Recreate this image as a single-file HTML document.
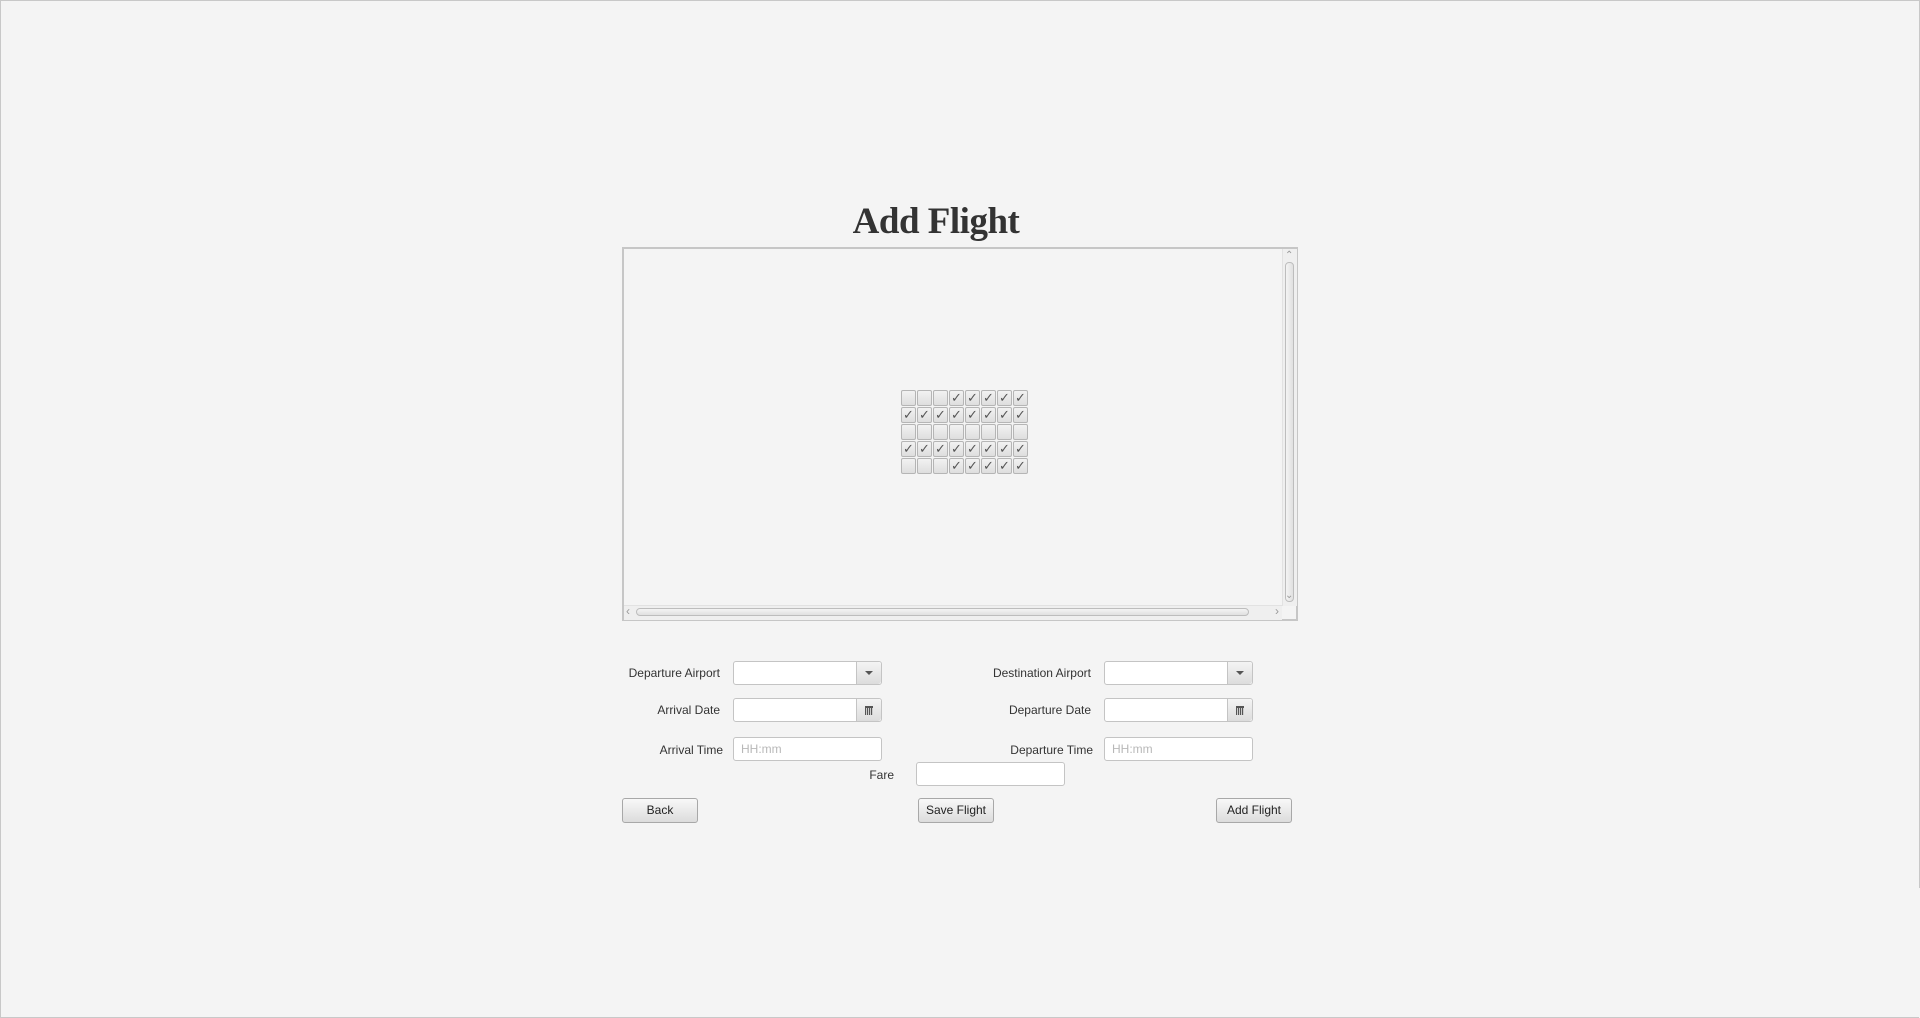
<!DOCTYPE html>
<html><head><meta charset="utf-8">
<style>
html,body{margin:0;padding:0}
body{width:1920px;height:1017px;background:#f4f4f4;position:relative;overflow:hidden;font-family:"Liberation Sans",sans-serif;color:#333}
.abs{position:absolute}
.frame{left:0;top:0;width:1918px;height:1016px;border-left:1px solid #c8c8c8;border-top:1px solid #c8c8c8;border-bottom:1px solid #c8c8c8}
.rline{left:1919px;top:0;width:1px;height:888px;background:#c8c8c8}
h1{position:absolute;left:0;width:1872px;top:200px;margin:0;text-align:center;font:bold 37px "Liberation Serif",serif;color:#333;letter-spacing:-0.5px}
.pane{left:622px;top:247px;width:672px;height:370px;border:2px solid #c6c6c6;background:#f4f4f4}
.vsb{left:1282px;top:249px;width:14px;height:357px;background:#efefef;border-left:1px solid #e2e2e2}
.vthumb{left:1285px;top:262px;width:7px;height:338px;border:1px solid #bdbdbd;border-radius:4px;background:linear-gradient(to right,#f4f4f4,#e0e0e0)}
.hsb{left:624px;top:605px;width:658px;height:14px;background:#efefef;border-top:1px solid #e2e2e2}
.hthumb{left:636px;top:608px;width:611px;height:6px;border:1px solid #bdbdbd;border-radius:4px;background:linear-gradient(#f4f4f4,#e0e0e0)}
.grid{left:901px;top:390px;display:grid;grid-template-columns:repeat(8,15px);grid-auto-rows:16px;gap:1px 1px}
.cb{box-sizing:border-box;border:1px solid #b5b5b5;border-radius:2px;background:linear-gradient(#f2f2f2,#dedede);font-size:13px;line-height:14px;text-align:center;color:#555}
.lbl{font-size:12px;color:#333;text-align:right;white-space:nowrap}
.fld{box-sizing:border-box;height:24px;border:1px solid #c4c4c4;border-radius:3px;background:#fff}
.btnr{position:absolute;right:0;top:0;width:24px;height:22px;border-left:1px solid #c4c4c4;background:linear-gradient(#f4f4f4,#dcdcdc);border-radius:0 3px 3px 0}
.ph{font-size:12px;color:#b8b8b8;padding-left:7px;line-height:22px}
.btn{box-sizing:border-box;height:25px;width:76px;border:1px solid #a8a8a8;border-radius:3px;background:linear-gradient(#f8f8f8,#dcdcdc);font-size:12px;text-align:center;line-height:23px;color:#222}
</style></head><body>
<div class="abs frame"></div>
<div class="abs rline"></div>
<h1>Add Flight</h1>
<div class="abs pane"></div>
<div class="abs vsb"></div>
<div class="abs vthumb"></div>
<div class="abs" style="left:1285px;top:250px;font-size:10px;color:#999">&#8963;</div>
<div class="abs" style="left:1285px;top:590px;font-size:10px;color:#999">&#8964;</div>
<div class="abs hsb"></div>
<div class="abs hthumb"></div>
<div class="abs" style="left:626px;top:604px;font-size:12px;color:#999">&lsaquo;</div>
<div class="abs" style="left:1275px;top:604px;font-size:12px;color:#999">&rsaquo;</div>
<div class="abs grid">
<div class="cb"></div><div class="cb"></div><div class="cb"></div><div class="cb">✓</div><div class="cb">✓</div><div class="cb">✓</div><div class="cb">✓</div><div class="cb">✓</div>
<div class="cb">✓</div><div class="cb">✓</div><div class="cb">✓</div><div class="cb">✓</div><div class="cb">✓</div><div class="cb">✓</div><div class="cb">✓</div><div class="cb">✓</div>
<div class="cb"></div><div class="cb"></div><div class="cb"></div><div class="cb"></div><div class="cb"></div><div class="cb"></div><div class="cb"></div><div class="cb"></div>
<div class="cb">✓</div><div class="cb">✓</div><div class="cb">✓</div><div class="cb">✓</div><div class="cb">✓</div><div class="cb">✓</div><div class="cb">✓</div><div class="cb">✓</div>
<div class="cb"></div><div class="cb"></div><div class="cb"></div><div class="cb">✓</div><div class="cb">✓</div><div class="cb">✓</div><div class="cb">✓</div><div class="cb">✓</div>
</div>

<div class="abs lbl" style="left:560px;width:160px;top:666px">Departure Airport</div>
<div class="abs fld" style="left:733px;top:661px;width:149px"><div class="btnr"><div style="margin:9px auto 0;width:0;height:0;border-left:4px solid transparent;border-right:4px solid transparent;border-top:4px solid #555"></div></div></div>
<div class="abs lbl" style="left:930px;width:161px;top:666px">Destination Airport</div>
<div class="abs fld" style="left:1104px;top:661px;width:149px"><div class="btnr"><div style="margin:9px auto 0;width:0;height:0;border-left:4px solid transparent;border-right:4px solid transparent;border-top:4px solid #555"></div></div></div>

<div class="abs lbl" style="left:560px;width:160px;top:703px">Arrival Date</div>
<div class="abs fld" style="left:733px;top:698px;width:149px"><div class="btnr"><div style="margin:7px auto 0;width:8px;height:7px;background:repeating-linear-gradient(to right,#555 0 1px,#ccc 1px 2px);border-top:2px solid #555"></div></div></div>
<div class="abs lbl" style="left:930px;width:161px;top:703px">Departure Date</div>
<div class="abs fld" style="left:1104px;top:698px;width:149px"><div class="btnr"><div style="margin:7px auto 0;width:8px;height:7px;background:repeating-linear-gradient(to right,#555 0 1px,#ccc 1px 2px);border-top:2px solid #555"></div></div></div>

<div class="abs lbl" style="left:560px;width:163px;top:743px">Arrival Time</div>
<div class="abs fld" style="left:733px;top:737px;width:149px"><div class="ph">HH:mm</div></div>
<div class="abs lbl" style="left:930px;width:163px;top:743px">Departure Time</div>
<div class="abs fld" style="left:1104px;top:737px;width:149px"><div class="ph">HH:mm</div></div>

<div class="abs lbl" style="left:800px;width:94px;top:768px">Fare</div>
<div class="abs fld" style="left:916px;top:762px;width:149px"></div>

<div class="abs btn" style="left:622px;top:798px">Back</div>
<div class="abs btn" style="left:918px;top:798px">Save Flight</div>
<div class="abs btn" style="left:1216px;top:798px">Add Flight</div>
</body></html>
